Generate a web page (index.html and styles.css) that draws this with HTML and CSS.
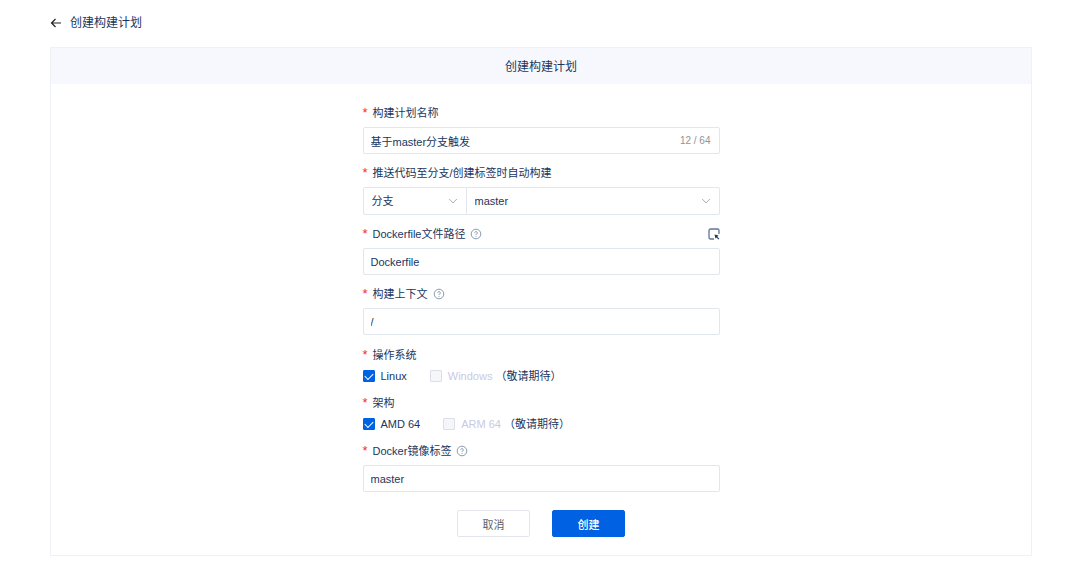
FILE: index.html
```html
<!DOCTYPE html>
<html lang="zh-CN">
<head>
    <meta charset="UTF-8">
    <meta name="viewport" content="width=device-width, initial-scale=1.0">
    <title>创建构建计划</title>
    <link rel="stylesheet" href="styles.css">
</head>
<body>
    <!-- help icon, used by several labels -->
    <svg class="sprite" aria-hidden="true">
        <symbol id="icon_help" viewBox="0 0 12 12">
            <circle cx="6" cy="6" r="4.8" fill="none" stroke="currentColor" stroke-width="0.8"/>
            <path d="M4.7 4.9a1.3 1.3 0 1 1 2 1.100c-.5.3-.7.5-.7 1" fill="none" stroke="currentColor" stroke-width="0.8"/>
            <circle cx="6" cy="8.300" r="0.5" fill="currentColor"/>
        </symbol>
    </svg>
    <div class="page">
        <header class="page_head">
            <a href="#" class="back" aria-label="返回">
                <svg width="12" height="12" viewBox="0 0 12 12"><path d="M11 6H1.500M5.500 2L1.500 6l4 4" fill="none" stroke="currentColor" stroke-width="1.2"/></svg>
            </a>
            <span>创建构建计划</span>
        </header>
        <main class="card">
            <h1 class="card_title">创建构建计划</h1>
            <form class="plan_form">
                <div class="item">
                    <div class="item_head">
                        <label class="item_label" for="plan_name">构建计划名称</label>
                    </div>
                    <div class="text_box">
                        <input type="text" id="plan_name" value="基于master分支触发" maxlength="64">
                        <span class="count">12 / 64</span>
                    </div>
                </div>
                <div class="item">
                    <div class="item_head">
                        <label class="item_label" for="ref_type">推送代码至分支/创建标签时自动构建</label>
                    </div>
                    <div class="select_group">
                        <div class="select_box type">
                            <select id="ref_type"><option>分支</option><option>标签</option></select>
                            <svg class="arrow" width="10" height="10" viewBox="0 0 10 10"><path d="M1.2 3l3.8 4 3.8-4" fill="none" stroke="currentColor"/></svg>
                        </div>
                        <div class="select_box">
                            <select id="ref_name" aria-label="分支名称"><option>master</option></select>
                            <svg class="arrow" width="10" height="10" viewBox="0 0 10 10"><path d="M1.2 3l3.8 4 3.8-4" fill="none" stroke="currentColor"/></svg>
                        </div>
                    </div>
                </div>
                <div class="item">
                    <div class="item_head">
                        <label class="item_label" for="file_path">Dockerfile文件路径</label>
                        <svg class="help" width="12" height="12"><use href="#icon_help"/></svg>
                        <button type="button" class="pick" aria-label="选择文件">
                            <svg width="12" height="12" viewBox="0 0 12 12">
                                <path d="M6 11H2.500A1.500 1.500 0 0 1 1 9.500V2.500A1.500 1.500 0 0 1 2.500 1h7A1.500 1.500 0 0 1 11 2.500V6" fill="none" stroke="#5f7896" stroke-width="1.3"/>
                                <path d="M6.500 6.500l4 1-1.200 1.200 2 2-.8.8-2-2-1 1z" fill="currentColor"/>
                            </svg>
                        </button>
                    </div>
                    <div class="text_box">
                        <input type="text" id="file_path" value="Dockerfile">
                    </div>
                </div>
                <div class="item">
                    <div class="item_head">
                        <label class="item_label" for="context">构建上下文</label>
                        <svg class="help" width="12" height="12"><use href="#icon_help"/></svg>
                    </div>
                    <div class="text_box">
                        <input type="text" id="context" value="/">
                    </div>
                </div>
                <div class="check_list">
                    <div class="check_item" role="group" aria-labelledby="os_label">
                        <div class="item_head">
                            <span class="item_label" id="os_label">操作系统</span>
                        </div>
                        <div class="check_row">
                            <label class="check"><input type="checkbox" checked>Linux</label>
                            <label class="check"><input type="checkbox" disabled>Windows</label>
                            <span class="soon">（敬请期待）</span>
                        </div>
                    </div>
                    <div class="check_item" role="group" aria-labelledby="arch_label">
                        <div class="item_head">
                            <span class="item_label" id="arch_label">架构</span>
                        </div>
                        <div class="check_row">
                            <label class="check"><input type="checkbox" checked>AMD 64</label>
                            <label class="check"><input type="checkbox" disabled>ARM 64</label>
                            <span class="soon">（敬请期待）</span>
                        </div>
                    </div>
                </div>
                <div class="item">
                    <div class="item_head">
                        <label class="item_label" for="image_tag">Docker镜像标签</label>
                        <svg class="help" width="12" height="12"><use href="#icon_help"/></svg>
                    </div>
                    <div class="text_box">
                        <input type="text" id="image_tag" value="master">
                    </div>
                </div>
                <div class="btns">
                    <button type="button" class="btn">取消</button>
                    <button type="submit" class="btn primary">创建</button>
                </div>
            </form>
        </main>
    </div>
</body>
</html>
```
FILE: styles.css
```css
* {margin:0; padding:0; box-sizing:border-box;}
body, input, select, button {
    font-family:"Liberation Sans", "Noto Sans CJK SC", sans-serif;
    font-size:11px; color:#1b365d;
}
body {background:#fff; line-height:20px;}
svg {display:block;}
.sprite {position:absolute; width:0; height:0;}
.page {padding:13px 48px 12px 50px;}

.page_head {display:flex; align-items:center; gap:8px; font-size:12px; margin-bottom:14px;}
.page_head .back {color:#222;}

.card {border:1px solid #f0f1f8;}
.card_title {
    background:#f7f8fe; font-size:12px; font-weight:400;
    line-height:20px; padding:9px 0 7px; text-align:center;
}
.plan_form {width:100%; max-width:357px; margin:0 auto; padding:19px 0 18px;}

/* form items */
.item {margin-bottom:9px;}
.item_head {display:flex; align-items:center; gap:5px; margin-bottom:4px;}
.item_label::before {content:"*"; color:#ff1f2d; font-size:13px; line-height:1; margin-right:5px;}
.help {color:#6d829d;}
.pick {margin-left:auto; border:0; background:none; cursor:pointer;}

.text_box {
    display:flex; align-items:center; height:27px; padding:0 8px 0 7px;
    border:1px solid #e2e6ee; border-radius:2px;
}
.text_box input {flex:1; min-width:0; height:24px; border:0; outline:0; background:none;}
.count {font-size:10px; color:#909399;}

.select_group {display:flex; height:28px; border:1px solid #e2e6ee; border-radius:2px;}
.select_box {display:grid; flex:1; align-items:center;}
.select_box.type {flex:0 0 103px; border-right:1px solid #e2e6ee;}
.select_box select, .select_box .arrow {grid-area:1 / 1;}
.select_box select {
    appearance:none; width:100%; height:26px; padding:0 24px 0 8px;
    border:0; outline:0; background:none;
}
.select_box .arrow {justify-self:end; margin-right:8px; color:#a8adb8; pointer-events:none;}

/* checkboxes */
.check_list {display:grid; gap:6px; padding:1px 0 6px;}
.check_list .item_head {margin-bottom:0;}
.check_row {display:flex; align-items:center; height:22px;}
.check {display:flex; align-items:center; gap:6px; margin-right:23px;}
.check input {
    appearance:none; width:12px; height:12px; display:grid; place-items:center;
    border:1px solid #dcdfe8; border-radius:1px; background:#f5f6fa;
}
.check input:checked {background:#0062e3; border-color:#0062e3;}
.check input:checked::before {
    content:""; width:7px; height:4px; margin-bottom:2px;
    border-left:1px solid #fff; border-bottom:1px solid #fff; transform:rotate(-45deg);
}
.check:has(input:disabled) {color:#c9c9e4; margin-right:3px;}

.btns {display:flex; justify-content:center; gap:22px; margin-top:18px;}
.btn {
    width:73px; height:27px; border:1px solid #e4e6ec; border-radius:2px;
    background:#fff; color:#606266; cursor:pointer;
}
.btn.primary {background:#0062e3; border-color:#0062e3; color:#fff; font-weight:500;}
```
